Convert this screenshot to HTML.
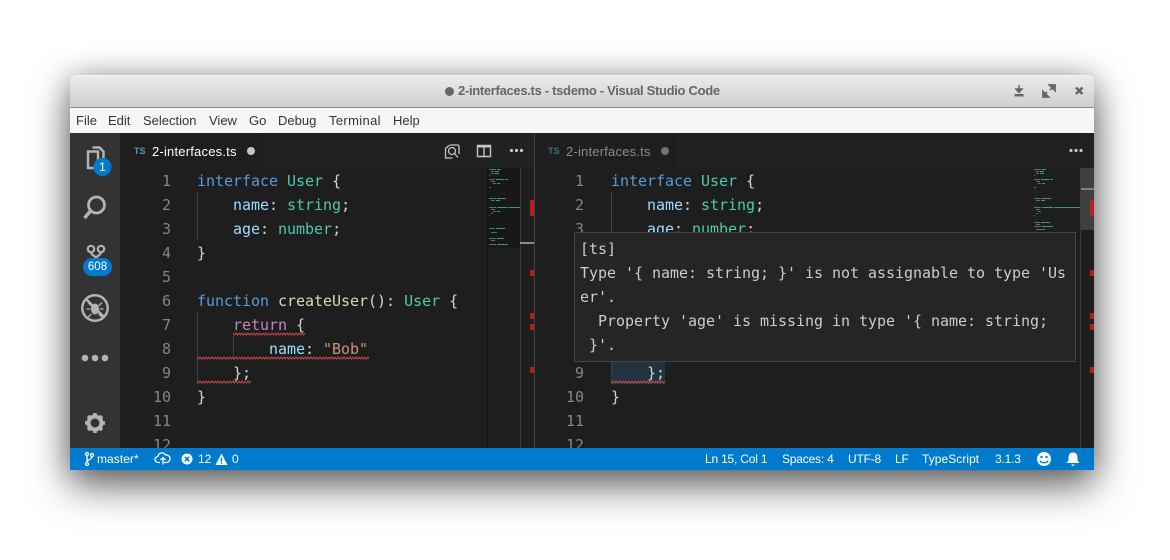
<!DOCTYPE html>
<html><head><meta charset="utf-8">
<style>
html,body{margin:0;padding:0;background:#fff}
body{width:1170px;height:560px;overflow:hidden;position:relative;font-family:"Liberation Sans",sans-serif}
.a{position:absolute}
#win{left:70px;top:75px;width:1024px;height:395px;background:#1e1e1e;border-radius:5px 5px 0 0;box-shadow:0 16px 40px rgba(0,0,0,.58),0 0 28px rgba(0,0,0,.24);overflow:hidden}
.ln{position:absolute;width:40px;text-align:right;color:#858585;font:15px/24px "DejaVu Sans Mono",monospace;margin-top:1px}
.code{position:absolute;white-space:pre;font:15px/24px "DejaVu Sans Mono",monospace;color:#d4d4d4;letter-spacing:-.03px;margin-top:1px}
.k{color:#569cd6}.t{color:#4ec9b0}.p{color:#9cdcfe}.f{color:#dcdcaa}.c{color:#c586c0}.s{color:#ce9178}
.m{position:absolute;top:113px;font-size:13px;line-height:16px;color:#333;white-space:nowrap}
.st{position:absolute;top:451px;font-size:12px;line-height:16px;color:#fff;white-space:nowrap;letter-spacing:-.2px}
.tab{position:absolute;font-size:13px;line-height:16px;white-space:nowrap}
.hv{position:absolute;left:580px;white-space:pre;font:15px/24px "DejaVu Sans Mono",monospace;color:#ccc;letter-spacing:-.03px}
</style></head>
<body>
<div id="win" class="a"></div>
<!-- title bar -->
<div class="a" style="left:70px;top:75px;width:1024px;height:32px;background:linear-gradient(#ececec,#cfcfcf);border-radius:5px 5px 0 0;box-shadow:inset 0 1px 0 #f5f5f5"></div>
<div class="a" style="left:70px;top:107px;width:1024px;height:1px;background:#8d8d8d"></div>
<div class="a" style="left:445px;top:87px;width:9px;height:9px;border-radius:50%;background:#666"></div>
<div class="a" style="left:458px;top:83px;font-size:13px;line-height:16px;font-weight:bold;color:#666;white-space:nowrap;letter-spacing:-.31px">2-interfaces.ts - tsdemo - Visual Studio Code</div>
<svg class="a" style="left:1010px;top:82px" width="80" height="18" viewBox="0 0 80 18">
<path d="M9 3v5M6 7L9 10.500 12 7z" fill="#666" stroke="#666" stroke-width="1.500"/>
<path d="M5 12.500h8v1.500h-8z" fill="#666" stroke="#666"/>
<path d="M33 14l4-4M40 8l4-4M39.500 3h5.500v5.500zM33 9.500v5.500h5.500z" stroke="#666" stroke-width="1.800" fill="#666"/>
<path d="M66 5.500l6.500 6.500M72.500 5.500l-6.500 6.500" stroke="#666" stroke-width="2.500"/>
</svg>
<!-- menu -->
<div class="a" style="left:70px;top:108px;width:1024px;height:25px;background:#f6f6f6"></div>
<div class="m" style="left:76px">File</div>
<div class="m" style="left:108px">Edit</div>
<div class="m" style="left:143px">Selection</div>
<div class="m" style="left:209px">View</div>
<div class="m" style="left:249px">Go</div>
<div class="m" style="left:278px">Debug</div>
<div class="m" style="left:329px;letter-spacing:.35px">Terminal</div>
<div class="m" style="left:393px">Help</div>
<!-- activity -->
<div class="a" style="left:70px;top:133px;width:50px;height:315px;background:#333"></div>
<svg class="a" style="left:70px;top:133px" width="50" height="315" viewBox="0 0 50 315">
<path d="M22.500 14.500h7l4 4v10M18 18.500h10v16.500H18z" fill="none" stroke="#b3b3b3" stroke-width="2.400"/>
<circle cx="32.500" cy="34" r="9" fill="#007acc"/>
<circle cx="26.500" cy="72" r="8" fill="none" stroke="#b3b3b3" stroke-width="2.800"/>
<path d="M20.500 78L14.500 85" stroke="#b3b3b3" stroke-width="3.500"/>
<g fill="none" stroke="#b3b3b3" stroke-width="2.200">
<circle cx="21" cy="116" r="3.200"/><circle cx="31" cy="116" r="3.200"/>
<path d="M21 119c0 4 5 3 5 7M31 119c0 4-5 3-5 7"/>
</g>
<rect x="13" y="125" width="29" height="18" rx="9" fill="#007acc"/>
<circle cx="25" cy="175" r="12.700" fill="none" stroke="#b3b3b3" stroke-width="2.500"/>
<path d="M16 166l18 18" stroke="#b3b3b3" stroke-width="2.500"/>
<ellipse cx="25" cy="176" rx="4" ry="5.500" fill="#b3b3b3"/>
<path d="M16.500 176h4M33.500 176h-4M18 169.500l3.500 3.500M32 169.500l-3.500 3.500M18 184l3.500-3M32 184l-3.500-3" stroke="#b3b3b3" stroke-width="1.300"/>
<circle cx="15" cy="225" r="3.300" fill="#b3b3b3"/><circle cx="25" cy="225" r="3.300" fill="#b3b3b3"/><circle cx="35" cy="225" r="3.300" fill="#b3b3b3"/>
<path d="M25 280v20M15 290h20M18 283l14 14M32 283l-14 14" stroke="#b3b3b3" stroke-width="3.500"/>
<circle cx="25" cy="290" r="6.500" fill="#333" stroke="#b3b3b3" stroke-width="4"/>
</svg>
<div class="a" style="left:93.500px;top:159px;width:18px;text-align:center;font-size:12px;line-height:16px;color:#fff">1</div>
<div class="a" style="left:83px;top:259px;width:29px;text-align:center;font-size:11.500px;line-height:16px;color:#fff">608</div>
<!-- tab bars -->
<div class="a" style="left:120px;top:133px;width:974px;height:35px;background:#212121"></div>
<div class="a" style="left:120px;top:133px;width:143px;height:35px;background:#1e1e1e"></div>
<div class="a" style="left:535px;top:133px;width:143px;height:35px;background:#1e1e1e"></div>
<div class="tab" style="left:134px;top:146px;font-size:9px;font-weight:bold;line-height:11px;color:#519aba">TS</div>
<div class="tab" style="left:152px;top:144px;color:#fff;letter-spacing:.2px">2-interfaces.ts</div>
<div class="a" style="left:247px;top:147px;width:8px;height:8px;border-radius:50%;background:#c5c5c5"></div>
<div class="tab" style="left:548px;top:146px;font-size:9px;font-weight:bold;line-height:11px;color:#3f7186">TS</div>
<div class="tab" style="left:566px;top:144px;color:#8a8a8a;letter-spacing:.2px">2-interfaces.ts</div>
<div class="a" style="left:661px;top:147px;width:8px;height:8px;border-radius:50%;background:#727272"></div>
<svg class="a" style="left:440px;top:140px" width="90" height="22" viewBox="0 0 90 22">
<g fill="none" stroke="#c5c5c5" stroke-width="1.300">
<path d="M10 5h8l1 1v8M5.500 8.500v9.500h7"/><path d="M5.500 8.500l4-3.500"/><circle cx="12" cy="11" r="3.500"/><path d="M14.500 13.500l3.500 4"/>
</g>
<path d="M37.500 5.500h13v11h-13zM44 5.500v11" fill="none" stroke="#c5c5c5" stroke-width="1.400"/>
<path d="M37.500 5h13v2.500h-13z" fill="#c5c5c5"/>
<circle cx="71.500" cy="10.500" r="1.600" fill="#c5c5c5"/><circle cx="76.500" cy="10.500" r="1.600" fill="#c5c5c5"/><circle cx="81.500" cy="10.500" r="1.600" fill="#c5c5c5"/>
</svg>
<svg class="a" style="left:1065px;top:145px" width="22" height="12" viewBox="0 0 22 12">
<circle cx="6" cy="5.500" r="1.600" fill="#c5c5c5"/><circle cx="11" cy="5.500" r="1.600" fill="#c5c5c5"/><circle cx="16" cy="5.500" r="1.600" fill="#c5c5c5"/>
</svg>
<div class="a" style="left:534px;top:133px;width:1px;height:315px;background:#444"></div>
<!-- left editor -->
<div class="a" style="left:120px;top:168px;width:414px;height:280px;overflow:hidden">
<div class="a" style="left:77px;top:24px;width:1px;height:48px;background:#404040"></div>
<div class="a" style="left:77px;top:144px;width:1px;height:72px;background:#404040"></div>
<div class="a" style="left:113px;top:168px;width:1px;height:24px;background:#404040"></div>
<div class="ln" style="left:11px;top:0">1</div><div class="ln" style="left:11px;top:24px">2</div><div class="ln" style="left:11px;top:48px">3</div><div class="ln" style="left:11px;top:72px">4</div><div class="ln" style="left:11px;top:96px">5</div><div class="ln" style="left:11px;top:120px">6</div><div class="ln" style="left:11px;top:144px">7</div><div class="ln" style="left:11px;top:168px">8</div><div class="ln" style="left:11px;top:192px">9</div><div class="ln" style="left:11px;top:216px">10</div><div class="ln" style="left:11px;top:240px">11</div><div class="ln" style="left:11px;top:264px">12</div>
<div class="code" style="left:77px;top:0"><span class="k">interface</span> <span class="t">User</span> {</div>
<div class="code" style="left:77px;top:24px">    <span class="p">name</span>: <span class="t">string</span>;</div>
<div class="code" style="left:77px;top:48px">    <span class="p">age</span>: <span class="t">number</span>;</div>
<div class="code" style="left:77px;top:72px">}</div>
<div class="code" style="left:77px;top:120px"><span class="k">function</span> <span class="f">createUser</span>(): <span class="t">User</span> {</div>
<div class="code" style="left:77px;top:144px">    <span class="c">return</span> {</div>
<div class="code" style="left:77px;top:168px">        <span class="p">name</span>: <span class="s">"Bob"</span></div>
<div class="code" style="left:77px;top:192px">    };</div>
<div class="code" style="left:77px;top:216px">}</div>
</div>
<!-- right editor -->
<div class="a" style="left:535px;top:168px;width:559px;height:280px;overflow:hidden">
<div class="a" style="left:76px;top:192px;width:54px;height:24px;background:#22333f"></div>
<div class="a" style="left:76px;top:24px;width:1px;height:48px;background:#404040"></div>
<div class="a" style="left:76px;top:192px;width:1px;height:24px;background:#404040"></div>
<div class="ln" style="left:9px;top:0">1</div><div class="ln" style="left:9px;top:24px">2</div><div class="ln" style="left:9px;top:48px">3</div><div class="ln" style="left:9px;top:192px">9</div><div class="ln" style="left:9px;top:216px">10</div><div class="ln" style="left:9px;top:240px">11</div><div class="ln" style="left:9px;top:264px">12</div>
<div class="code" style="left:76px;top:0"><span class="k">interface</span> <span class="t">User</span> {</div>
<div class="code" style="left:76px;top:24px">    <span class="p">name</span>: <span class="t">string</span>;</div>
<div class="code" style="left:76px;top:48px">    <span class="p">age</span>: <span class="t">number</span>;</div>
<div class="code" style="left:76px;top:192px">    };</div>
<div class="code" style="left:76px;top:216px">}</div>
</div>
<!-- squiggles, minimap, ruler -->
<svg class="a" style="left:0;top:0" width="1170" height="560" viewBox="0 0 1170 560">
<defs><pattern id="sq" width="6" height="4" patternUnits="userSpaceOnUse" x="197" y="0"><path d="M0 1l1.500 2 1.500-2 1.500 2 1.500-2" fill="none" stroke="#c8474c" stroke-width="1"/></pattern></defs>
<rect x="233" y="332" width="72" height="4" fill="url(#sq)"/>
<rect x="197" y="356" width="172" height="4" fill="url(#sq)"/>
<rect x="197" y="380" width="54" height="4" fill="url(#sq)"/>
<rect x="611" y="380" width="54" height="4" fill="url(#sq)"/>
<!-- left minimap -->
<rect x="487" y="168" width="1" height="280" fill="#141414"/>
<rect x="488" y="168" width="32" height="80" fill="#181818"/>
<g opacity=".7">
<path d="M489 169.500h7M491 171.500h3M491 173.500h3M489 175.500h1M489 179.500h6M491 181.500h4M493 183.500h3M489 187.500h2M489 198.500h7M491 200.500h4M489 207.500h7M491 209.500h4M493 211.500h3M491 213.500h2M489 215.500h1M489 228.500h6M491 232.500h6M489 238.500h7M491 240.500h4M489 244.500h7" stroke="#5f99b0" fill="none"/>
<path d="M497 169.500h4M495 171.500h4M495 173.500h4M496 179.500h8M505 179.500h3M497 183.500h3M497 198.500h9M496 200.500h4M497 207.500h11M509 207.500h11M497 211.500h3M496 228.500h9M497 238.500h7M497 244.500h11" stroke="#4ec9b0" fill="none"/>
</g>
<rect x="520" y="168" width="1" height="280" fill="#3a3a3a"/>
<rect x="520" y="242" width="14" height="2" fill="#8a8a8a"/>
<rect x="530" y="200" width="4" height="16" fill="#b71c1c"/>
<rect x="530" y="270" width="4" height="6" fill="#b71c1c"/>
<rect x="530" y="313" width="4" height="6" fill="#b71c1c"/>
<rect x="530" y="324" width="4" height="6" fill="#b71c1c"/>
<rect x="530" y="367" width="4" height="6" fill="#b71c1c"/>
<!-- right minimap -->
<g opacity=".7">
<path d="M1034 169.500h7M1036 171.500h3M1036 173.500h3M1034 175.500h1M1034 179.500h6M1036 181.500h4M1038 183.500h3M1034 187.500h2M1034 198.500h7M1036 200.500h4M1034 207.500h7M1036 209.500h4M1038 211.500h3M1036 213.500h2M1034 215.500h1M1034 222.500h6M1036 224.500h4M1034 226.500h7M1036 229.500h9" stroke="#5f99b0" fill="none"/>
<path d="M1042 169.500h4M1040 171.500h4M1040 173.500h4M1041 179.500h8M1050 179.500h3M1042 183.500h3M1042 198.500h9M1041 200.500h4M1042 207.500h11M1054 207.500h26M1041 222.500h9M1042 226.500h11" stroke="#4ec9b0" fill="none"/>
</g>
<rect x="1080" y="168" width="1" height="280" fill="#3a3a3a"/>
<rect x="1081" y="168" width="13" height="62" fill="#3f3f3f"/>
<rect x="1081" y="188" width="13" height="2" fill="#7d7d7d"/>
<rect x="1090" y="200" width="4" height="16" fill="#b5232f"/>
<rect x="1090" y="270" width="4" height="6" fill="#b71c1c"/>
<rect x="1090" y="313" width="4" height="6" fill="#b71c1c"/>
<rect x="1090" y="324" width="4" height="6" fill="#b71c1c"/>
<rect x="1090" y="367" width="4" height="6" fill="#b71c1c"/>
</svg>
<!-- hover -->
<div class="a" style="left:574px;top:232px;width:500px;height:128px;background:#252526;border:1px solid #454545"></div>
<div class="hv" style="top:237px">[ts]</div>
<div class="hv" style="top:261px">Type '{ name: string; }' is not assignable to type 'Us</div>
<div class="hv" style="top:285px">er'.</div>
<div class="hv" style="top:309px">  Property 'age' is missing in type '{ name: string;</div>
<div class="hv" style="top:333px"> }'.</div>
<!-- status bar -->
<div class="a" style="left:70px;top:448px;width:1024px;height:22px;background:#007acc"></div>
<svg class="a" style="left:70px;top:448px" width="1024" height="22" viewBox="0 0 1024 22">
<g fill="none" stroke="#fff" stroke-width="1.300">
<circle cx="17" cy="6" r="1.500"/><circle cx="17" cy="16" r="1.500"/><circle cx="22" cy="7" r="1.500"/><path d="M17 7.500v7M22 8.500c0 3-4 3-5 5"/>
<path d="M90 14.500h-2a3 3 0 0 1 0-6 4 4 0 0 1 7.500-1.500 3.500 3.500 0 0 1 1.500 7.500h-3M93 16.500v-7M90.500 12l2.500-2.500 2.500 2.500"/>
</g>
<circle cx="117" cy="11" r="5.500" fill="#fff"/>
<path d="M114.800 8.800l4.400 4.400M119.200 8.800l-4.400 4.400" stroke="#007acc" stroke-width="1.500"/>
<path d="M151.500 5.500l6 11.500h-12z" fill="#fff"/><path d="M151.500 9.500v4M151.500 14.300v1.500" stroke="#007acc" stroke-width="1.400"/>
<circle cx="974" cy="11" r="7" fill="#fff"/>
<circle cx="971.500" cy="9" r="1.200" fill="#007acc"/><circle cx="976.500" cy="9" r="1.200" fill="#007acc"/>
<path d="M970 12.500c1 3 7 3 8 0" fill="none" stroke="#007acc" stroke-width="1.300"/>
<path d="M1003 4.500c3 0 4.500 2 4.500 5v3l2 2.500h-13l2-2.500v-3c0-3 1.500-5 4.500-5zM1001 16.500h4l-2 1.700z" fill="#fff"/>
</svg>
<div class="st" style="left:97px;letter-spacing:.05px">master*</div>
<div class="st" style="left:198px;letter-spacing:0">12</div>
<div class="st" style="left:232px;letter-spacing:0">0</div>
<div class="st" style="left:705px">Ln 15, Col 1</div>
<div class="st" style="left:782px">Spaces: 4</div>
<div class="st" style="left:848px">UTF-8</div>
<div class="st" style="left:895px">LF</div>
<div class="st" style="left:922px;letter-spacing:.05px">TypeScript</div>
<div class="st" style="left:995px">3.1.3</div>
</body></html>
